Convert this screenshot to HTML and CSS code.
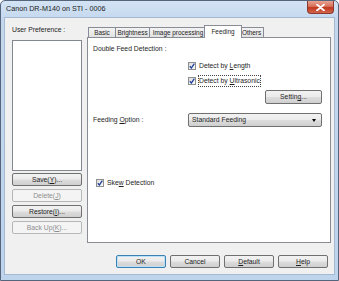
FILE: index.html
```html
<!DOCTYPE html>
<html lang="en">
<head>
<meta charset="UTF-8" /><meta name="viewport" content="width=device-width,initial-scale=1" />
<title>Canon DR-M140 on STI - 0006</title>
<link rel="stylesheet" href="styles.css">
</head>
<body>
  <div class="window">
    <div class="titlebar">
      <span class="title">Canon DR-M140 on STI - 0006</span>
      <span class="close" aria-label="Close">
        <svg width="9" height="7" viewBox="0 0 9 7" aria-hidden="true"><path d="M1 0.5 L8 6.5 M8 0.5 L1 6.5" stroke="#fff" stroke-width="1.8" stroke-linecap="round"/></svg>
      </span>
    </div>
    <div class="client">
      <div class="sidebar">
        <div class="label">User Preference :</div>
        <div class="listbox"></div>
        <div class="side-buttons">
          <button class="btn">Save(<u>Y</u>)...</button>
          <button class="btn" disabled>Delete(<u>J</u>)</button>
          <button class="btn">Restore(<u>I</u>)...</button>
          <button class="btn" disabled>Back Up(<u>K</u>)...</button>
        </div>
      </div>
      <div class="main">
        <div class="tabs">
          <div class="tab w-basic">Basic</div>
          <div class="tab w-bright">Brightness</div>
          <div class="tab w-image">Image processing</div>
          <div class="tab w-feed active">Feeding</div>
          <div class="tab w-others">Others</div>
        </div>
        <div class="panel">
          <div class="label">Double Feed Detection :</div>
          <div class="check-group">
            <label class="check"><span class="box checked"></span><span>Detect by <u>L</u>ength</span></label>
            <label class="check"><span class="box checked"></span><span class="focus">Detect by <u>U</u>ltrasonic</span></label>
          </div>
          <div class="setting-row"><button class="btn setting">Settin<u>g</u>...</button></div>
          <div class="option-row">
            <span class="option-label">Feeding <u>O</u>ption :</span>
            <div class="select"><span>Standard Feeding</span><span class="arrow"></span></div>
          </div>
          <label class="check skew"><span class="box checked"></span><span>Ske<u>w</u> Detection</span></label>
        </div>
        <div class="footer">
          <button class="btn wide default">OK</button>
          <button class="btn wide">Cancel</button>
          <button class="btn wide"><u>D</u>efault</button>
          <button class="btn wide"><u>H</u>elp</button>
        </div>
      </div>
    </div>
  </div>
</body>
</html>
```
FILE: styles.css
```css
:root {
  --text:#1e1e1e;
  --client:#f0f0f0;
  --tab-border:#898c95;
  --btn-border:#707070;
  --disabled:#8e8f8f;
}
*,*::before,*::after{box-sizing:border-box;}
body {
  margin:0;background:#fff;font-family:'Liberation Sans',Arial,sans-serif;font-size:6.8px;line-height:10px;color:var(--text);
}
u{text-decoration:underline;text-underline-offset:1px;text-decoration-thickness:0.6px;}
.window {
  width:339px;height:281px;display:flex;flex-direction:column;
  border:1px solid #55657c;border-radius:5px 5px 0 0;padding:0 4px 6px 4px;
  background:linear-gradient(#d3e3f4 0,#c4d7ed 20px,#bed3ec 100%);
}
.titlebar {
  height:17px;display:flex;align-items:flex-start;
}
.title {
  font-size:7.2px;line-height:16px;padding-left:1px;color:#1c1c1c;
}
.close {
  margin-left:auto;width:27px;height:13px;display:flex;align-items:center;justify-content:center;
  border:1px solid #8a3a2e;border-top:none;border-radius:0 0 4px 4px;
  background:linear-gradient(#e8a493 0,#d7705a 45%,#c1391f 55%,#d2654c 100%);
}
.client {
  flex:1;display:flex;background:var(--client);box-shadow:0 0 0 1px #a4b9d2;padding:7px 0 0 7px;
}
/* left column */
.sidebar { width:70px;display:flex;flex-direction:column; }
.sidebar .label { height:10px; }
.listbox {
  margin-top:5px;height:131px;background:#fff;border:1px solid #828790;
}
.side-buttons { margin-top:2px;display:flex;flex-direction:column;gap:3px; }
.btn {
  font:inherit;line-height:10px;color:var(--text);height:13px;padding:0 2px;white-space:nowrap;
  border:1px solid var(--btn-border);border-radius:2px;
  background:linear-gradient(#f2f2f2 0,#ebebeb 48%,#dddddd 52%,#cfcfcf 100%);
}
.btn:disabled {
  color:var(--disabled);border-color:#b5b8bb;background:#f4f4f4;
}
/* tab control */
.main { width:244px;margin-left:5px;display:flex;flex-direction:column; }
.tabs { height:12px;display:flex;align-items:flex-end;padding-left:1px; }
.tab {
  height:10px;line-height:9px;text-align:center;white-space:nowrap;font-size:6.4px;
  border:1px solid var(--tab-border);border-bottom:none;margin-right:-1px;
  background:linear-gradient(#f3f3f3,#e2e2e2);
}
.w-basic{width:28px;}
.w-bright{width:35px;}
.w-image{width:58px;}
.w-feed{width:34px;}
.w-others{width:25px;}
.tab.active {
  height:13px;line-height:11px;width:38px;margin:0 -3px -1px -2px;background:#fff;position:relative;z-index:1;
}
.panel {
  height:206px;background:#fff;border:1px solid var(--tab-border);padding:6px 8px 0 5px;
}
.panel .label { height:10px; }
.check-group { margin:7px 0 0 95px;display:flex;flex-direction:column;gap:5px;align-items:flex-start; }
.check { display:flex;align-items:center;height:10px;white-space:nowrap; }
.box {
  width:8px;height:8px;margin-right:3px;border:1px solid #8e8f8f;
  background:linear-gradient(135deg,#dcdcdc,#fbfbfb);
}
.box.checked {
  background:url("data:image/svg+xml,%3Csvg xmlns='http://www.w3.org/2000/svg' width='6' height='6'%3E%3Cpath d='M0.8 3.2 L2.4 5 L5.3 0.6' fill='none' stroke='%23213f9a' stroke-width='1.3'/%3E%3C/svg%3E") center/6px 6px no-repeat,linear-gradient(135deg,#dcdcdc,#fbfbfb);
}
.focus { outline:1px dotted #444;outline-offset:0; }
.setting-row { margin-top:4px;display:flex;justify-content:flex-end; }
.btn.setting { width:57px;height:14px; }
.option-row { margin-top:9px;height:14px;display:flex;align-items:center; }
.option-label { width:95px; }
.select {
  flex:1;height:14px;display:flex;align-items:center;justify-content:space-between;padding:0 5px 0 3px;
  border:1px solid var(--btn-border);border-radius:2px;
  background:linear-gradient(#f2f2f2 0,#ebebeb 48%,#dddddd 52%,#cfcfcf 100%);
}
.arrow {
  width:0;height:0;border-left:2.5px solid transparent;border-right:2.5px solid transparent;border-top:3px solid #000;
}
.skew { margin:51px 0 0 3px; }
.footer { margin-top:12px;display:flex;justify-content:flex-end;gap:4px;padding-right:3px; }
.btn.wide { width:50px; }
.btn.default { border-color:#3c7fb1;box-shadow:inset 0 0 0 1px #b9e2f8; }
```
